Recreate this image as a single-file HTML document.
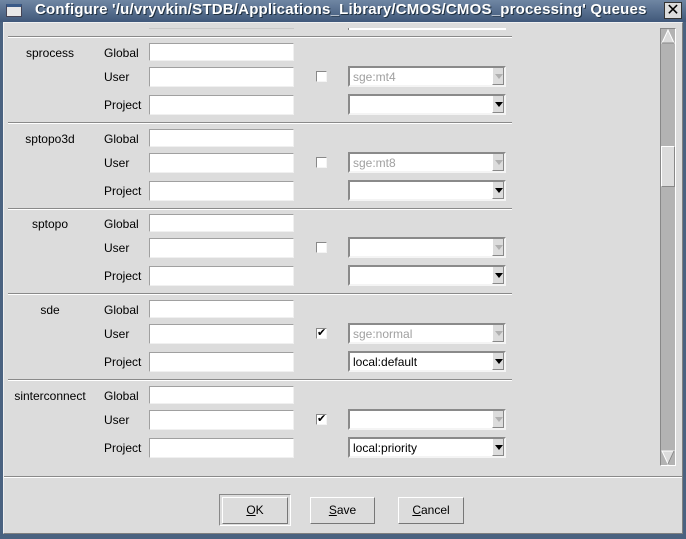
<!DOCTYPE html>
<html><head><style>
*{margin:0;padding:0;box-sizing:border-box}
body{width:686px;height:539px;background:#4a6280;position:relative;overflow:hidden;font-family:"Liberation Sans",sans-serif;font-size:12px;color:#000}
.a{position:absolute}
#title{left:0;top:0;width:686px;height:22px;background:linear-gradient(#6f86a3,#40587a);}
#title span{position:absolute;left:35px;top:1px;color:#fff;font-weight:bold;font-size:15px;text-shadow:1px 1px 0 #203040;white-space:nowrap;letter-spacing:0.2px}
#body{left:3px;top:22px;width:680px;height:512px;background:#dcdcdc;border:1px solid #f0f0f0;border-right-color:#808080;border-bottom-color:#808080}
.inp{position:absolute;background:#fff;border:1px solid #a0a0a0;border-right-color:#f0f0f0;border-bottom-color:#f0f0f0}
.cb{position:absolute;background:#fff;border:2px solid #8a8a8a;border-right-color:#f4f4f4;border-bottom-color:#f4f4f4}
.cb .arr{position:absolute;right:0;top:0;width:12px;height:17px;background:#dcdcdc;border-left:1px solid #fff;border-right:1px solid #888;border-bottom:1px solid #888}
.cb .arr i{position:absolute;left:2px;top:6px;width:0;height:0;border-left:4px solid transparent;border-right:4px solid transparent;border-top:5px solid #000}
.cb.dis .arr i{border-top-color:#b0b0b0}
.cb span{position:absolute;left:3px;top:2px;font-size:12px}
.cb.dis span{color:#a0a0a0}
.chk{position:absolute;width:11px;height:11px;background:#fff;border:1px solid #888;border-right-color:#f4f4f4;border-bottom-color:#f4f4f4;font-size:11px;line-height:9px;text-align:center}
.sep{position:absolute;left:8px;width:504px;height:2px;border-top:1px solid #8a8a8a;border-bottom:1px solid #fff}
.lbl{position:absolute}
.name{position:absolute;width:80px;left:10px;text-align:center}
.btn{position:absolute;height:27px;border:1px solid #fff;border-right-color:#777;border-bottom-color:#777;text-align:center;line-height:25px;font-size:12px}
</style></head><body>
<div class="a" id="title">
<div class="a" style="left:6px;top:4px;width:16px;height:13px;background:#e8e8e8;border:1px solid #445;border-top:3px solid #3a5a88"></div>
<span>Configure '/u/vryvkin/STDB/Applications_Library/CMOS/CMOS_processing' Queues</span>
<div class="a" style="left:664px;top:2px;width:18px;height:17px;background:#dcdcdc;border:1px solid #333;font-size:16px;line-height:15px;text-align:center;color:#000">✕</div>
</div>
<div class="a" id="body"></div>

<div class="a" style="left:149px;top:28px;width:145px;height:1px;background:#c8c8c8"></div>
<div class="a" style="left:348px;top:28px;width:158px;height:2px;background:#fff;border-left:1px solid #888"></div>
<div class="sep" style="top:36px"></div>

<div id="rows"></div>

<div class="a" style="left:660px;top:28px;width:16px;height:438px;background:#b3b3b3;border:1px solid #888;border-right-color:#fff;border-bottom-color:#fff"></div>
<div class="a" style="left:661px;top:29px;width:14px;height:15px;">
<svg width="14" height="15"><polygon points="1,14 7,1 13,14" fill="#dcdcdc" stroke="#fff"/><line x1="1" y1="14" x2="13" y2="14" stroke="#888"/></svg></div>
<div class="a" style="left:661px;top:146px;width:14px;height:41px;background:#dcdcdc;border:1px solid #fff;border-right-color:#888;border-bottom-color:#888"></div>
<div class="a" style="left:661px;top:450px;width:14px;height:15px;">
<svg width="14" height="15"><polygon points="1,1 13,1 7,14" fill="#dcdcdc" stroke="#fff"/><line x1="7" y1="14" x2="13" y2="1" stroke="#888"/></svg></div>

<div class="a" style="left:4px;top:476px;width:678px;height:2px;border-top:1px solid #8a8a8a;border-bottom:1px solid #fff"></div>

<div class="a" style="left:219px;top:494px;width:72px;height:32px;border:1px solid #888;border-right-color:#fff;border-bottom-color:#fff"></div>
<div class="btn" style="left:222px;top:497px;width:66px"><u>O</u>K</div>
<div class="btn" style="left:310px;top:497px;width:65px"><u>S</u>ave</div>
<div class="btn" style="left:398px;top:497px;width:66px"><u>C</u>ancel</div>

<script>
var secs=[["sprocess",37,"sge:mt4","",false],["sptopo3d",123,"sge:mt8","",false],["sptopo",208,"","",false],["sde",294,"sge:normal","local:default",true],["sinterconnect",380,"","local:priority",true]];
var h="";
secs.forEach(function(s){var y=s[1];
h+='<div class="name" style="top:'+(y+9)+'px">'+s[0]+'</div>';
h+='<div class="lbl" style="left:104px;top:'+(y+9)+'px">Global</div>';
h+='<div class="lbl" style="left:104px;top:'+(y+33)+'px">User</div>';
h+='<div class="lbl" style="left:104px;top:'+(y+61)+'px">Project</div>';
h+='<div class="inp" style="left:149px;top:'+(y+6)+'px;width:145px;height:18px"></div>';
h+='<div class="inp" style="left:149px;top:'+(y+30)+'px;width:145px;height:20px"></div>';
h+='<div class="inp" style="left:149px;top:'+(y+58)+'px;width:145px;height:20px"></div>';
h+='<div class="chk" style="left:316px;top:'+(y+34)+'px">'+(s[4]?'✔':'')+'</div>';
h+='<div class="cb dis" style="left:348px;top:'+(y+29)+'px;width:158px;height:21px"><span>'+s[2]+'</span><div class="arr"><i></i></div></div>';
h+='<div class="cb" style="left:348px;top:'+(y+57)+'px;width:158px;height:21px"><span>'+s[3]+'</span><div class="arr"><i></i></div></div>';
if(y<380)h+='<div class="sep" style="top:'+(y+85)+'px"></div>';
});
document.getElementById("rows").outerHTML=h;
</script>
</body></html>
